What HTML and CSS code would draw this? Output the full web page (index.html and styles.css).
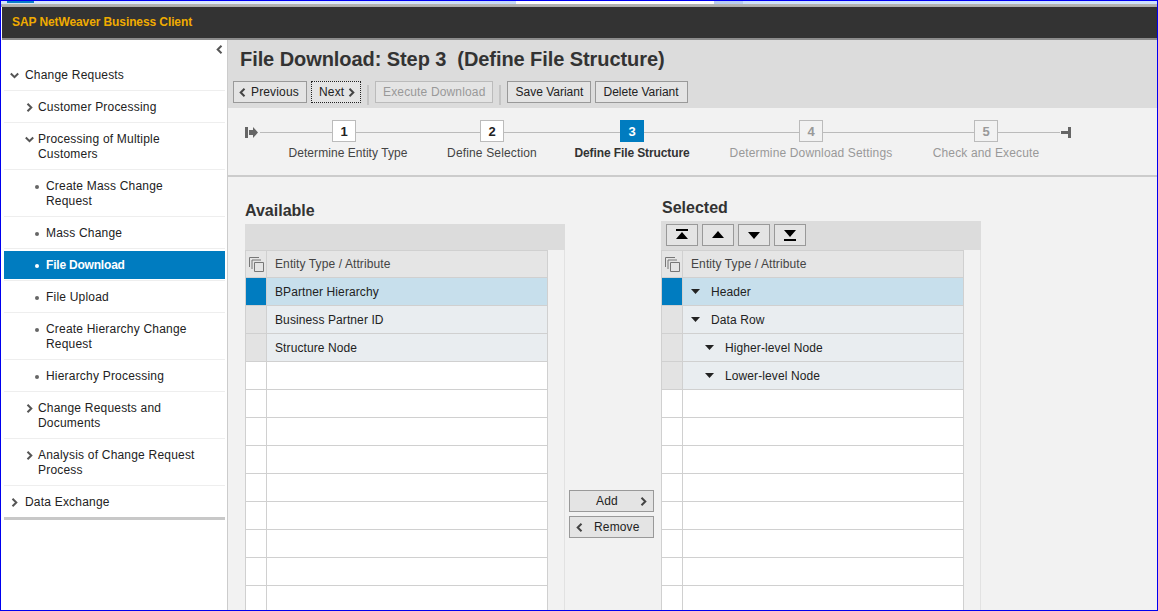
FILE: index.html
```html
<!DOCTYPE html>
<html lang="en">
<head>
    <meta charset="UTF-8">
    <title>File Download: Step 3</title>
    <link rel="stylesheet" href="styles.css">
</head>
<body>
<svg class="sprite" width="0" height="0">
    <symbol id="chev-r" viewBox="0 0 9 9"><path d="M2.5 .8 6.3 4.5 2.5 8.2" fill="none" stroke="currentColor" stroke-width="2"/></symbol>
    <symbol id="chev-l" viewBox="0 0 9 9"><path d="M6.5 .8 2.7 4.5 6.5 8.2" fill="none" stroke="currentColor" stroke-width="2"/></symbol>
    <symbol id="chev-d" viewBox="0 0 9 9"><path d="M.8 2.5 4.5 6.2 8.2 2.5" fill="none" stroke="currentColor" stroke-width="2"/></symbol>
    <symbol id="copy" viewBox="0 0 15 15"><path d="M.5 10V.5H10M3 12V3h9M5.500 5.500h9v9h-9z" fill="none" stroke="currentColor"/></symbol>
    <symbol id="top" viewBox="0 0 14 12"><path d="M1 0h12v2H1zM7 3l6 7H1z"/></symbol>
    <symbol id="up" viewBox="0 0 14 12"><path d="M7 2l6 7H1z"/></symbol>
    <symbol id="down" viewBox="0 0 14 12"><path d="M1 3h12l-6 7z"/></symbol>
    <symbol id="bottom" viewBox="0 0 14 12"><path d="M1 1h12l-6 7zM1 10h12v2H1z"/></symbol>
    <symbol id="tree" viewBox="0 0 9 5"><path d="M0 0h9L4.500 5z"/></symbol>
    <symbol id="road-start" viewBox="0 0 13 11"><path d="M0 0h3v11H0zM4 3h4V0l5 5.500L8 11V8H4z"/></symbol>
    <symbol id="road-end" viewBox="0 0 10 11"><path d="M0 4h7V0h3v11H7V7H0z"/></symbol>
</svg>

<div class="window">
    <div class="tabstrip">
        <span class="tab tab-start"></span>
        <span class="tab tab-open"></span>
        <span class="tab tab-dark"></span>
        <span class="tab tab-end"></span>
    </div>
    <header class="appbar">SAP NetWeaver Business Client</header>

    <div class="columns">
        <nav class="sidebar">
            <div class="collapse"><svg class="ico-small"><use href="#chev-l"/></svg></div>
            <ul class="menu">
                <li><a class="lvl1"><svg class="chev"><use href="#chev-d"/></svg>Change Requests</a></li>
                <li><a class="lvl2"><svg class="chev"><use href="#chev-r"/></svg>Customer Processing</a></li>
                <li><a class="lvl2"><svg class="chev"><use href="#chev-d"/></svg>Processing of Multiple Customers</a></li>
                <li><a class="lvl3"><i class="dot"></i>Create Mass Change Request</a></li>
                <li><a class="lvl3"><i class="dot"></i>Mass Change</a></li>
                <li class="current"><a class="lvl3"><i class="dot"></i>File Download</a></li>
                <li><a class="lvl3"><i class="dot"></i>File Upload</a></li>
                <li><a class="lvl3"><i class="dot"></i>Create Hierarchy Change Request</a></li>
                <li><a class="lvl3"><i class="dot"></i>Hierarchy Processing</a></li>
                <li><a class="lvl2"><svg class="chev"><use href="#chev-r"/></svg>Change Requests and Documents</a></li>
                <li><a class="lvl2"><svg class="chev"><use href="#chev-r"/></svg>Analysis of Change Request Process</a></li>
                <li class="last"><a class="lvl1"><svg class="chev"><use href="#chev-r"/></svg>Data Exchange</a></li>
            </ul>
        </nav>

        <main class="content">
            <div class="titlebar">
                <h1>File Download: Step 3&nbsp; (Define File Structure)</h1>
                <div class="actions">
                    <button class="btn btn-prev"><svg class="ico-small"><use href="#chev-l"/></svg>Previous</button>
                    <button class="btn btn-next">Next<svg class="ico-small"><use href="#chev-r"/></svg></button>
                    <span class="sep"></span>
                    <button class="btn btn-off">Execute Download</button>
                    <span class="sep"></span>
                    <button class="btn btn-save">Save Variant</button>
                    <button class="btn btn-delete">Delete Variant</button>
                </div>
            </div>

            <div class="roadmap">
                <svg class="road-icon road-start"><use href="#road-start"/></svg>
                <div class="step step-1"><b>1</b><span>Determine Entity Type</span></div>
                <div class="step step-2"><b>2</b><span>Define Selection</span></div>
                <div class="step step-3 step-on"><b>3</b><span>Define File Structure</span></div>
                <div class="step step-4 step-off"><b>4</b><span>Determine Download Settings</span></div>
                <div class="step step-5 step-off"><b>5</b><span>Check and Execute</span></div>
                <svg class="road-icon road-end"><use href="#road-end"/></svg>
            </div>

            <div class="picker">
                <section class="panel panel-left">
                    <h2>Available</h2>
                    <div class="panel-tools"></div>
                    <div class="panel-body">
                        <table class="grid">
                            <thead><tr><th><svg class="ico-copy"><use href="#copy"/></svg></th><th>Entity Type / Attribute</th></tr></thead>
                            <tbody>
                                <tr class="row-sel"><td></td><td>BPartner Hierarchy</td></tr>
                                <tr class="row-data"><td></td><td>Business Partner ID</td></tr>
                                <tr class="row-data"><td></td><td>Structure Node</td></tr>
                                <tr><td></td><td></td></tr>
                                <tr><td></td><td></td></tr>
                                <tr><td></td><td></td></tr>
                                <tr><td></td><td></td></tr>
                                <tr><td></td><td></td></tr>
                                <tr><td></td><td></td></tr>
                                <tr><td></td><td></td></tr>
                                <tr><td></td><td></td></tr>
                                <tr><td></td><td></td></tr>
                            </tbody>
                        </table>
                    </div>
                </section>

                <div class="transfer">
                    <button class="btn btn-add">Add<svg class="ico-small"><use href="#chev-r"/></svg></button>
                    <button class="btn btn-remove"><svg class="ico-small"><use href="#chev-l"/></svg>Remove</button>
                </div>

                <section class="panel panel-right">
                    <h2>Selected</h2>
                    <div class="panel-tools">
                        <button class="btn btn-move"><svg><use href="#top"/></svg></button>
                        <button class="btn btn-move"><svg><use href="#up"/></svg></button>
                        <button class="btn btn-move"><svg><use href="#down"/></svg></button>
                        <button class="btn btn-move"><svg><use href="#bottom"/></svg></button>
                    </div>
                    <div class="panel-body">
                        <table class="grid">
                            <thead><tr><th><svg class="ico-copy"><use href="#copy"/></svg></th><th>Entity Type / Attribute</th></tr></thead>
                            <tbody>
                                <tr class="row-sel"><td></td><td><svg class="tree"><use href="#tree"/></svg>Header</td></tr>
                                <tr class="row-data"><td></td><td><svg class="tree"><use href="#tree"/></svg>Data Row</td></tr>
                                <tr class="row-data"><td></td><td class="indent"><svg class="tree"><use href="#tree"/></svg>Higher-level Node</td></tr>
                                <tr class="row-data"><td></td><td class="indent"><svg class="tree"><use href="#tree"/></svg>Lower-level Node</td></tr>
                                <tr><td></td><td></td></tr>
                                <tr><td></td><td></td></tr>
                                <tr><td></td><td></td></tr>
                                <tr><td></td><td></td></tr>
                                <tr><td></td><td></td></tr>
                                <tr><td></td><td></td></tr>
                                <tr><td></td><td></td></tr>
                                <tr><td></td><td></td></tr>
                            </tbody>
                        </table>
                    </div>
                </section>
            </div>
        </main>
    </div>
</div>
</body>
</html>
```

FILE: styles.css
```css
* {
    box-sizing: border-box;
}

html, body {
    margin: 0;
    height: 100%;
    overflow: hidden;
}

body {
    font-family: "Liberation Sans", Arial, sans-serif;
    font-size: 12px;
    color: #222;
    background: #fff;
}

svg {
    fill: currentColor;
}

.sprite {
    display: block;
}

.window {
    height: 611px;
    display: flex;
    flex-direction: column;
    border: 1px solid #0000f0;
    overflow: hidden;
}

/* browser tabs behind the app */
.tabstrip {
    flex: none;
    height: 6px;
    display: flex;
    border-bottom: 3px solid;
    border-image: linear-gradient(#eee, #ccc, #aaa) 1;
}

.tab {
    display: block;
}

.tab-start {
    width: 515px;
    background: linear-gradient(#0a7fc8, #0a7fc8) no-repeat 6px 0 / 27px 2px, linear-gradient(90deg, #d5e5fa, #e0eafb 60%, #c5d9f7);
}

.tab-open {
    width: 198px;
    background: #fff;
}

.tab-dark {
    width: 29px;
    background: #b9cdf0;
}

.tab-end {
    flex: 1;
    background: #cfe2fb;
}

.appbar {
    flex: none;
    height: 33px;
    padding: 0 0 2px 10px;
    margin-left: 1px;
    display: flex;
    align-items: center;
    background: #333;
    border-bottom: 2px solid #8c8c8c;
    color: #f0ab00;
    font-weight: bold;
    font-size: 12px;
    letter-spacing: -.1px;
}

.columns {
    flex: 1;
    min-height: 0;
    display: flex;
}

/* left menu */
.sidebar {
    flex: none;
    width: 227px;
    padding: 0 2px 0 3px;
    border-right: 1px solid #ccc;
    background: #fff;
}

.collapse {
    height: 19px;
    display: flex;
    justify-content: flex-end;
    align-items: center;
    color: #555;
    padding: 0 1px 0 0;
}

.menu {
    list-style: none;
    margin: 0;
    padding: 0;
}

.menu li {
    border-bottom: 1px solid #eee;
}

.menu a {
    display: flex;
    align-items: flex-start;
    padding-top: 9px;
    padding-bottom: 7px;
    padding-right: 20px;
    line-height: 15px;
    font-size: 12px;
    letter-spacing: .2px;
    color: #222;
}

.menu .lvl1 {
    padding-left: 6px;
}

.menu .lvl2 {
    padding-left: 21px;
}

.menu .lvl3 {
    padding-left: 31px;
}

.chev {
    flex: none;
    width: 9px;
    height: 9px;
    margin: 3px 6px 0 0;
    color: #555;
}

.lvl2 .chev {
    margin-right: 4px;
}

.dot {
    flex: none;
    width: 4px;
    height: 4px;
    margin: 6px 7px 0 0;
    border-radius: 50%;
    background: #666;
}

.menu .current {
    padding: 2px 0 1px;
}

.menu .current a {
    height: 28px;
    padding-top: 7px;
    padding-bottom: 6px;
    background: #007cc0;
    color: #fff;
    font-weight: bold;
    letter-spacing: -.2px;
}

.current .dot {
    background: #fff;
}

.menu .last {
    border-bottom: 3px solid #c8c8c8;
}

/* right side */
.content {
    flex: 1;
    min-width: 0;
    background: #f2f2f2;
}

.titlebar {
    height: 68px;
    background: #dcdcdc;
    padding: 8px 0 0 5px;
}

.titlebar h1 {
    margin: 0 0 0 7px;
    font-size: 20px;
    line-height: 23px;
    font-weight: bold;
    letter-spacing: -.07px;
    color: #333;
}

.actions {
    display: flex;
    align-items: flex-start;
    gap: 4px;
    margin-top: 10px;
}

.btn {
    height: 22px;
    padding: 0 7px;
    display: inline-flex;
    align-items: center;
    border: 1px solid #999;
    background: #e4e4e4;
    font-family: inherit;
    font-size: 12px;
    letter-spacing: .15px;
    color: #222;
}

.btn svg {
    color: #444;
}

.ico-small {
    flex: none;
    width: 9px;
    height: 9px;
}

.btn-prev {
    width: 74px;
    gap: 4px;
    padding: 0 0 0 4px;
}

.btn-next {
    width: 50px;
    gap: 3px;
    padding: 0 0 0 7px;
    border: 1px dotted #222;
}

.btn-off {
    border-color: #bbb;
    color: #999;
}

.btn-save {
    width: 84px;
    letter-spacing: 0;
}

.btn-delete {
    width: 93px;
    letter-spacing: 0;
}

.sep {
    width: 2px;
    height: 20px;
    margin: 4px 2px 0;
    background: #c4c4c4;
}

/* roadmap: the line is a background behind the numbered boxes */
.roadmap {
    height: 69px;
    display: flex;
    align-items: flex-start;
    padding: 12px 0 0 17px;
    border-bottom: 2px solid #ccc;
    background: linear-gradient(#bbb, #bbb) no-repeat 32px 24px / 800px 1px;
}

.road-icon {
    flex: none;
    height: 11px;
    margin-top: 7px;
    color: #666;
}

.road-start {
    width: 13px;
    margin-right: 30px;
}

.road-end {
    width: 10px;
    margin-left: 23px;
}

.step {
    flex: none;
    display: flex;
    flex-direction: column;
    align-items: center;
}

.step-1 {
    width: 120px;
}

.step-2 {
    width: 168px;
}

.step-3 {
    width: 112px;
}

.step-4 {
    width: 246px;
}

.step-5 {
    width: 104px;
}

.step b {
    width: 24px;
    height: 22px;
    display: flex;
    align-items: center;
    justify-content: center;
    border: 1px solid #bbb;
    background: #fff;
    font-size: 13px;
}

.step span {
    margin-top: 4px;
    line-height: 15px;
    white-space: nowrap;
    letter-spacing: .15px;
    color: #444;
}

.step-1 b {
    margin-right: 8px;
}

.step-1 span {
    letter-spacing: .05px;
}

.step-on b {
    border-color: #007cc0;
    background: #007cc0;
    color: #fff;
}

.step-on span {
    font-weight: bold;
    letter-spacing: -.1px;
    color: #333;
}

.step-off b {
    background: #f2f2f2;
    color: #999;
}

.step-off span {
    color: #999;
}

.picker {
    display: flex;
    align-items: flex-start;
    padding: 22px 0 0 17px;
}

.panel {
    flex: none;
    width: 320px;
}

.panel h2 {
    margin: 0 0 4px;
    font-size: 16px;
    line-height: 18px;
    font-weight: bold;
    color: #333;
}

.panel-left {
    margin-top: 3px;
}

.panel-right h2 {
    padding-left: 1px;
}

.panel-tools {
    height: 26px;
    display: flex;
    gap: 4px;
    background: #dcdcdc;
}

.panel-right .panel-tools {
    height: 29px;
    padding: 3px 0 0 5px;
}

.btn-move {
    width: 32px;
    padding: 0;
    justify-content: center;
}

.btn-move svg {
    width: 14px;
    height: 12px;
    color: #000;
}

.panel-body {
    width: 320px;
    border-right: 1px solid #e2e2e2;
    background: #f2f2f2;
}

.grid {
    width: 303px;
    table-layout: fixed;
    border-collapse: collapse;
    background: #fff;
}

.grid th, .grid td {
    height: 28px;
    padding: 0 0 0 8px;
    border: 1px solid #d0d0d0;
    font-size: 12px;
    font-weight: normal;
    letter-spacing: .1px;
    text-align: left;
    white-space: nowrap;
}

.grid th {
    height: 27px;
    background: #e5e5e5;
    color: #444;
}

.grid th:first-child, .grid td:first-child {
    width: 21px;
    padding: 0;
}

.ico-copy {
    display: block;
    width: 15px;
    height: 15px;
    margin: 1px 0 0 3px;
    color: #777;
}

.row-sel td {
    background: #c7dfec;
}

.row-sel td:first-child {
    background: #007cc0;
}

.row-data td {
    background: #e9edf0;
}

.row-data td:first-child {
    background: #e3e3e3;
}

.tree {
    width: 9px;
    height: 5px;
    margin: 0 11px 2px 0;
    color: #222;
}

.grid .indent {
    padding-left: 22px;
}

.transfer {
    flex: none;
    width: 96px;
    display: flex;
    flex-direction: column;
    gap: 4px;
    padding: 291px 7px 0 4px;
}

.btn-add {
    justify-content: space-between;
    padding: 0 5px 0 26px;
}

.btn-remove {
    gap: 10px;
    padding: 0 0 0 5px;
}
```
